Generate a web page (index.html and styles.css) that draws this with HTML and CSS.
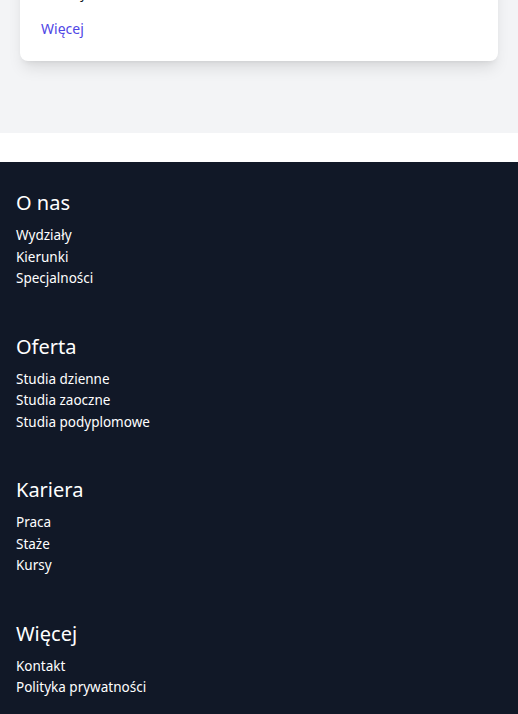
FILE: index.html
```html
<!DOCTYPE html>
<html lang="pl">
<head>
<meta charset="utf-8">
<title>Uczelnia</title>
<link rel="stylesheet" href="styles.css">
</head>
<body>
<section class="features">
  <div class="card">
    <p class="card-text">Poznaj</p>
    <a class="card-link" href="#">Więcej</a>
  </div>
</section>
<div class="spacer"></div>
<footer class="footer">
  <div class="col">
    <h3 class="col-title">O nas</h3>
    <ul class="links">
      <li><a href="#">Wydziały</a></li>
      <li><a href="#">Kierunki</a></li>
      <li><a href="#">Specjalności</a></li>
    </ul>
  </div>
  <div class="col">
    <h3 class="col-title">Oferta</h3>
    <ul class="links">
      <li><a href="#">Studia dzienne</a></li>
      <li><a href="#">Studia zaoczne</a></li>
      <li><a href="#">Studia podyplomowe</a></li>
    </ul>
  </div>
  <div class="col">
    <h3 class="col-title">Kariera</h3>
    <ul class="links">
      <li><a href="#">Praca</a></li>
      <li><a href="#">Staże</a></li>
      <li><a href="#">Kursy</a></li>
    </ul>
  </div>
  <div class="col">
    <h3 class="col-title">Więcej</h3>
    <ul class="links">
      <li><a href="#">Kontakt</a></li>
      <li><a href="#">Polityka prywatności</a></li>
    </ul>
  </div>
</footer>
</body>
</html>
```
FILE: styles.css
```css
* { box-sizing: border-box; }
html, body { margin: 0; padding: 0; }
body {
  font-family: "Noto Sans", "Open Sans", sans-serif;
  background: #ffffff;
  color: #111827;
  overflow: hidden;
}
.features {
  background: #f3f4f6;
  padding: 0 20px 72px;
}
.card {
  margin-top: -37px;
  background: #ffffff;
  border-radius: 8px;
  padding: 20px 21px 22px;
  box-shadow: 0 10px 15px -3px rgba(0,0,0,0.1), 0 4px 6px -4px rgba(0,0,0,0.1);
}
.card-text {
  margin: 0;
  font-size: 14px;
  line-height: 20px;
}
.card-link {
  display: block;
  margin-top: 16px;
  font-size: 14px;
  line-height: 20px;
  color: #4f46e5;
  text-decoration: none;
}
.spacer { height: 29px; background: #ffffff; }
.footer {
  background: #111827;
  color: #ffffff;
  padding: 27px 16px 40px;
  display: flex;
  flex-direction: column;
  gap: 43px;
}
.col-title {
  margin: 0 0 8px;
  font-size: 20px;
  line-height: 28px;
  font-weight: 400;
}
.links {
  list-style: none;
  margin: 0;
  padding: 0;
}
.links li {
  font-size: 13.5px;
  line-height: 21.5px;
}
.links a { color: #ffffff; text-decoration: none; }
```
